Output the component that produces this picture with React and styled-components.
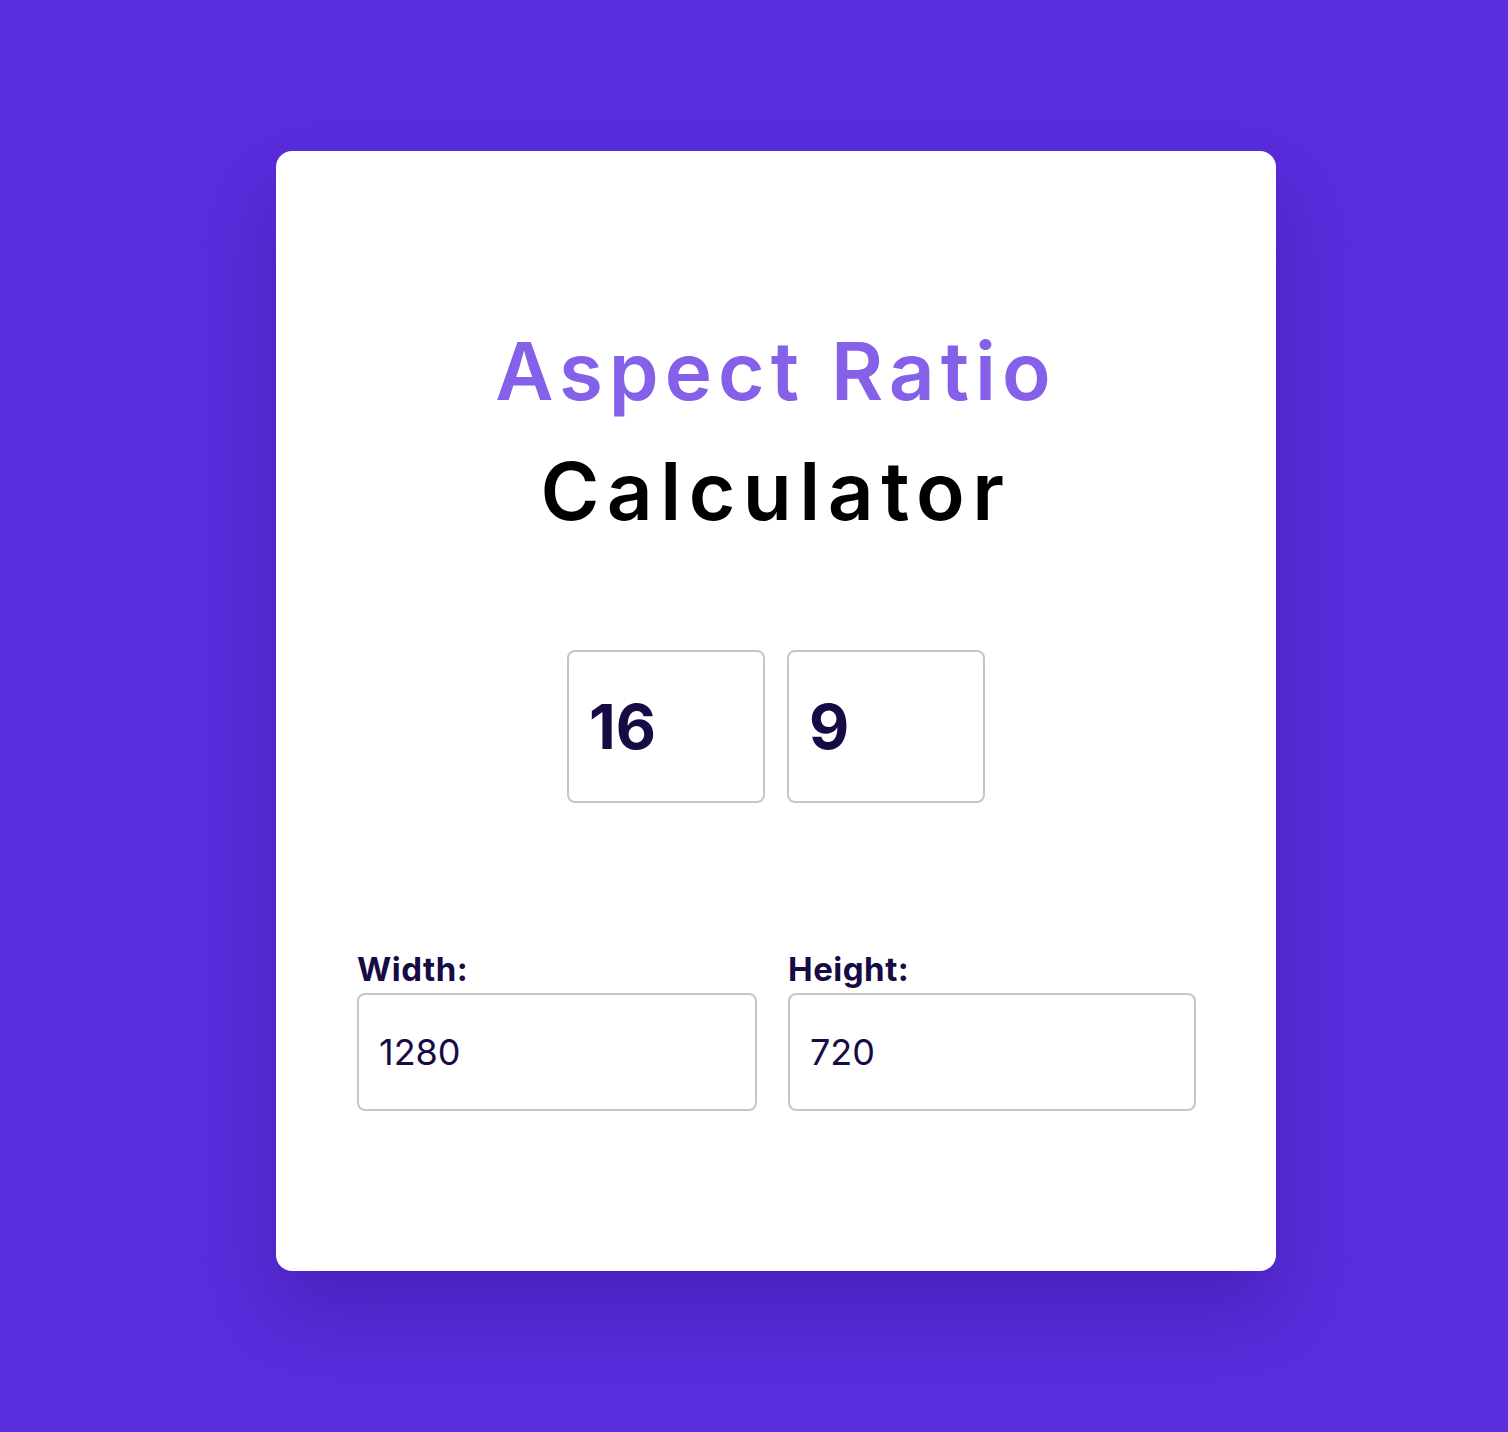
import React, { useState } from "react";
import styled, { createGlobalStyle } from "styled-components";

const GlobalStyle = createGlobalStyle`
  * { box-sizing: border-box; }
  html, body { margin: 0; padding: 0; }
  body {
    background: #5a2ddd;
    font-family: "Inter", "Noto Sans", sans-serif;
    min-height: 1432px;
  }
`;

const Page = styled.div`
  display: flex;
  justify-content: center;
  padding: 151px 0 0 44px;
  min-height: 1432px;
`;

const Card = styled.main`
  width: 1000px;
  height: 1120px;
  background: #ffffff;
  border-radius: 16px;
  box-shadow: 0 40px 80px rgba(40, 10, 120, 0.35);
  padding: 160px 81px 0;
  display: flex;
  flex-direction: column;
  align-items: center;
`;

const Title = styled.h1`
  margin: 0;
  text-align: center;
  font-size: 80px;
  line-height: 120px;
  font-weight: 600;
  letter-spacing: 7.5px;
  color: #000;
`;

const Accent = styled.span`
  display: block;
  color: #8560e8;
  letter-spacing: 6px;
`;

const RatioRow = styled.div`
  margin-top: 99px;
  display: flex;
  gap: 22px;
`;

const RatioInput = styled.input`
  width: 198px;
  height: 153px;
  border: 2px solid #c4c6cc;
  border-radius: 8px;
  padding: 0 0 0 20px;
  font-family: inherit;
  font-size: 62px;
  font-weight: 700;
  color: #170a45;
  background: #fff;
  outline: none;
`;

const Fields = styled.div`
  margin-top: 146px;
  align-self: stretch;
  display: grid;
  grid-template-columns: 400px 408px;
  column-gap: 31px;
`;

const Field = styled.label`
  display: flex;
  flex-direction: column;
`;

const FieldLabel = styled.span`
  font-size: 33px;
  line-height: 40px;
  font-weight: 700;
  letter-spacing: 0.5px;
  color: #170a45;
  margin-bottom: 4px;
`;

const SizeInput = styled.input`
  width: 100%;
  height: 118px;
  border: 2px solid #c4c6cc;
  border-radius: 8px;
  padding: 0 0 0 20px;
  font-family: inherit;
  font-size: 36px;
  font-weight: 400;
  color: #170a45;
  background: #fff;
  outline: none;
`;

export default function App() {
  const [a, setA] = useState("16");
  const [b, setB] = useState("9");
  const [w, setW] = useState("1280");
  const [h, setH] = useState("720");
  return (
    <>
      <GlobalStyle />
      <Page>
        <Card>
          <Title>
            <Accent>Aspect Ratio</Accent>
            Calculator
          </Title>
          <RatioRow>
            <RatioInput value={a} onChange={(e) => setA(e.target.value)} />
            <RatioInput value={b} onChange={(e) => setB(e.target.value)} />
          </RatioRow>
          <Fields>
            <Field>
              <FieldLabel>Width:</FieldLabel>
              <SizeInput value={w} onChange={(e) => setW(e.target.value)} />
            </Field>
            <Field>
              <FieldLabel>Height:</FieldLabel>
              <SizeInput value={h} onChange={(e) => setH(e.target.value)} />
            </Field>
          </Fields>
        </Card>
      </Page>
    </>
  );
}
